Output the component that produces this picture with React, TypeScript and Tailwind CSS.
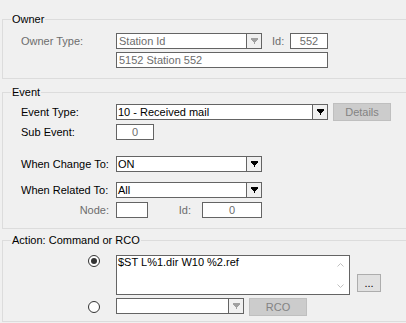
import type { ReactNode } from 'react'

const ink = 'text-black'
const dim = 'text-[#6d6d6d]'

function Arrow({ disabled }: { disabled?: boolean }) {
  const fill = disabled ? '#a0a0a0' : '#000000'
  return (
    <svg width="7" height="6" viewBox="0 0 7 6" shapeRendering="crispEdges">
      <rect x="0" y="0" width="7" height="2" fill={fill} />
      <rect x="1" y="2" width="5" height="1" fill={fill} />
      <rect x="2" y="3" width="3" height="1" fill={fill} />
      <rect x="3" y="4" width="1" height="2" fill={fill} />
    </svg>
  )
}

function Combo({
  width,
  value,
  disabled,
}: {
  width: string
  value: string
  disabled?: boolean
}) {
  return (
    <div className={`flex h-[16px] border border-[#646464] bg-white ${width}`}>
      <span
        className={`flex-1 overflow-hidden whitespace-nowrap leading-[14px] ${
          disabled ? 'pl-[2px] ' + dim : 'pl-[1px] ' + ink
        }`}
      >
        {value}
      </span>
      <div className="flex w-[15px] items-center justify-center border-l border-[#646464] bg-[#f0f0f0]">
        <Arrow disabled={disabled} />
      </div>
    </div>
  )
}

function Box({
  width,
  value,
  center,
  disabled,
}: {
  width: string
  value?: string
  center?: boolean
  disabled?: boolean
}) {
  return (
    <div
      className={`h-[16px] border border-[#646464] bg-white leading-[14px] whitespace-nowrap ${width} ${
        center ? 'text-center' : 'pl-[2px]'
      } ${disabled ? dim : ink}`}
    >
      {value}
    </div>
  )
}

function Group({
  title,
  className,
  children,
}: {
  title: string
  className: string
  children: ReactNode
}) {
  return (
    <div className={`relative w-[420px] border-t border-b border-l border-[#dcdcdc] ${className}`}>
      <span className="absolute left-[8px] top-[-7px] bg-[#f0f0f0] px-[1px] leading-[13px] text-black">
        {title}
      </span>
      {children}
    </div>
  )
}

function Label({ children, muted, right }: { children: ReactNode; muted?: boolean; right?: boolean }) {
  return (
    <span
      className={`w-[95px] shrink-0 whitespace-nowrap ${muted ? dim : ink} ${
        right ? 'pr-[7px] text-right' : ''
      }`}
    >
      {children}
    </span>
  )
}

function Radio({ checked }: { checked?: boolean }) {
  return (
    <div className="flex h-[12px] w-[12px] items-center justify-center rounded-full border border-[#333333] bg-white">
      {checked && <div className="h-[6px] w-[6px] rounded-full bg-[#333333]" />}
    </div>
  )
}

function Button({ label, width, disabled }: { label: string; width: string; disabled?: boolean }) {
  return (
    <div
      className={`flex h-[18px] items-center justify-center border ${width} ${
        disabled
          ? 'border-[#bfbfbf] bg-[#cccccc] text-[#838383]'
          : 'border-[#adadad] bg-[#e1e1e1] text-black'
      }`}
    >
      {label}
    </div>
  )
}

export default function App() {
  return (
    <div
      className="h-[323px] w-[406px] overflow-hidden bg-[#f0f0f0] pl-[2px] pt-[19px] text-[11px] leading-[13px]"
      style={{ fontFamily: '"Liberation Sans", Arial, sans-serif' }}
    >
      {/* Owner */}
      <Group title="Owner" className="pl-[18px] pt-[13px] pb-[10px]">
        <div className="flex h-[16px] items-center">
          <Label muted>Owner Type:</Label>
          <Combo width="w-[146px]" value="Station Id" disabled />
          <span className={`ml-[10px] w-[18px] ${dim}`}>Id:</span>
          <Box width="w-[38px]" value="552" center disabled />
        </div>
        <div className="mt-[3px] flex">
          <span className="w-[95px] shrink-0" />
          <Box width="w-[212px]" value="5152 Station 552" disabled />
        </div>
      </Group>

      {/* Event */}
      <Group title="Event" className="mt-[13px] pl-[18px] pt-[10px] pb-[10px]">
        <div className="flex h-[18px] items-center">
          <Label>Event Type:</Label>
          <Combo width="w-[212px]" value="10 - Received mail" />
          <div className="ml-[5px]">
            <Button label="Details" width="w-[58px]" disabled />
          </div>
        </div>
        <div className="mt-[3px] flex h-[16px] items-center">
          <Label>Sub Event:</Label>
          <Box width="w-[38px]" value="0" center disabled />
        </div>
        <div className="mt-[16px] flex h-[16px] items-center">
          <Label>When Change To:</Label>
          <Combo width="w-[146px]" value="ON" />
        </div>
        <div className="mt-[10px] flex h-[16px] items-center">
          <Label>When Related To:</Label>
          <Combo width="w-[146px]" value="All" />
        </div>
        <div className="mt-[4px] flex h-[16px] items-center">
          <Label muted right>
            Node:
          </Label>
          <Box width="w-[32px]" />
          <span className={`w-[43px] text-right ${dim}`}>Id:</span>
          <div className="ml-[11px]">
            <Box width="w-[60px]" value="0" center disabled />
          </div>
        </div>
      </Group>

      {/* Action */}
      <Group title="Action: Command or RCO" className="mt-[11px] pl-[18px] pt-[14px] pb-[5px]">
        <div className="flex items-start">
          <div className="flex w-[95px] shrink-0 justify-end pr-[16px]">
            <Radio checked />
          </div>
          <div className="flex h-[40px] w-[234px] border border-[#646464] bg-white">
            <span className="flex-1 pl-[1px] leading-[12px] text-black">$ST L%1.dir W10 %2.ref</span>
            <div className="flex w-[17px] flex-col items-center justify-between pb-[6px] pt-[7px]">
              <svg width="7" height="4" viewBox="0 0 7 4">
                <path d="M0.5 3.5 L3.5 0.5 L6.5 3.5" fill="none" stroke="#c0c0c0" strokeWidth="1" />
              </svg>
              <svg width="7" height="4" viewBox="0 0 7 4">
                <path d="M0.5 0.5 L3.5 3.5 L6.5 0.5" fill="none" stroke="#c0c0c0" strokeWidth="1" />
              </svg>
            </div>
          </div>
          <div className="ml-[7px] mt-[19px]">
            <Button label="..." width="w-[24px]" />
          </div>
        </div>
        <div className="mt-[3px] flex h-[18px] items-start">
          <div className="flex w-[95px] shrink-0 justify-end pr-[16px] pt-[3px]">
            <Radio />
          </div>
          <Combo width="w-[128px]" value="" disabled />
          <div className="ml-[5px]">
            <Button label="RCO" width="w-[58px]" disabled />
          </div>
        </div>
      </Group>
    </div>
  )
}
